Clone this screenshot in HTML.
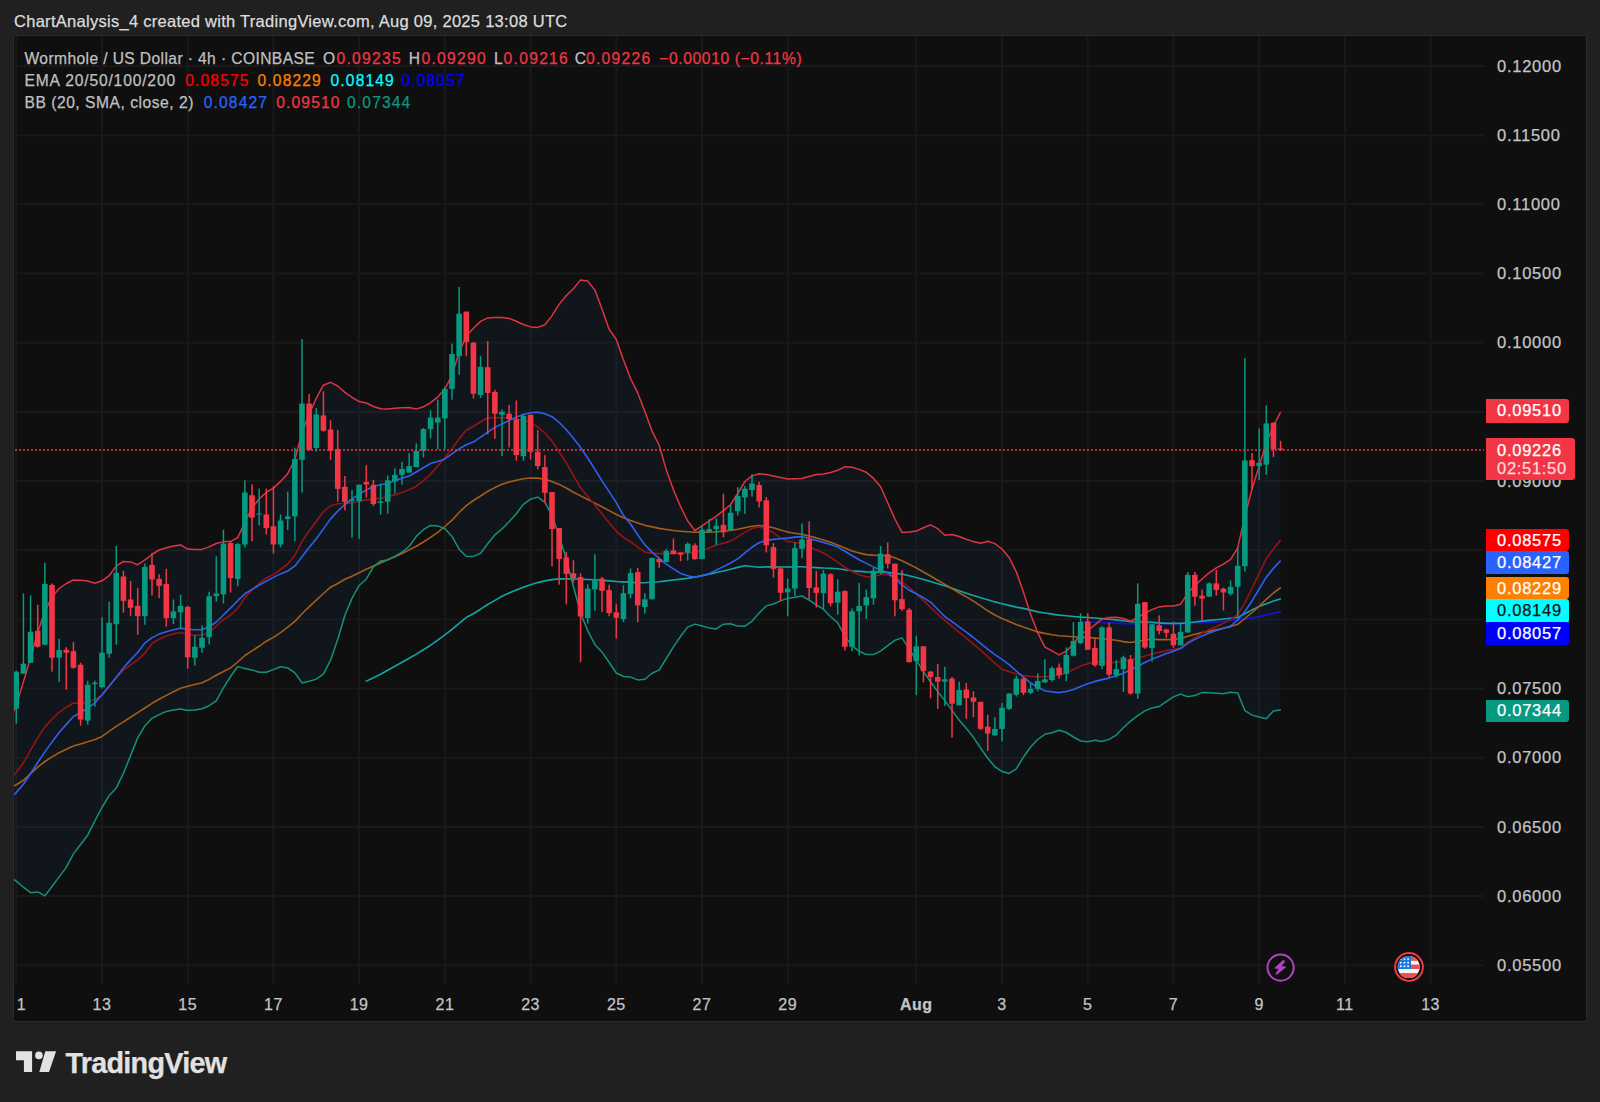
<!DOCTYPE html>
<html><head><meta charset="utf-8"><style>
html,body{margin:0;padding:0;}
div{-webkit-text-stroke:0.25px currentColor;}
body{width:1600px;height:1102px;position:relative;overflow:hidden;background:#202020;font-family:"Liberation Sans",sans-serif;}
#panel{position:absolute;left:13px;top:35px;width:1572px;height:985px;background:#0f0f0f;border:1px solid #2b2b2b;}
</style></head><body>
<div id="panel"></div>
<svg width="1600" height="1102" viewBox="0 0 1600 1102" style="position:absolute;left:0;top:0"><defs><clipPath id="pane"><rect x="14" y="36" width="1470" height="948"/></clipPath></defs><g stroke="#191919" stroke-width="2"><line x1="14" y1="66.0" x2="1484" y2="66.0"/><line x1="14" y1="135.2" x2="1484" y2="135.2"/><line x1="14" y1="204.3" x2="1484" y2="204.3"/><line x1="14" y1="273.5" x2="1484" y2="273.5"/><line x1="14" y1="342.7" x2="1484" y2="342.7"/><line x1="14" y1="411.9" x2="1484" y2="411.9"/><line x1="14" y1="481.0" x2="1484" y2="481.0"/><line x1="14" y1="550.2" x2="1484" y2="550.2"/><line x1="14" y1="619.4" x2="1484" y2="619.4"/><line x1="14" y1="688.5" x2="1484" y2="688.5"/><line x1="14" y1="757.7" x2="1484" y2="757.7"/><line x1="14" y1="826.9" x2="1484" y2="826.9"/><line x1="14" y1="896.0" x2="1484" y2="896.0"/><line x1="14" y1="965.2" x2="1484" y2="965.2"/><line x1="16.3" y1="36" x2="16.3" y2="984"/><line x1="102.0" y1="36" x2="102.0" y2="984"/><line x1="187.7" y1="36" x2="187.7" y2="984"/><line x1="273.4" y1="36" x2="273.4" y2="984"/><line x1="359.1" y1="36" x2="359.1" y2="984"/><line x1="444.9" y1="36" x2="444.9" y2="984"/><line x1="530.6" y1="36" x2="530.6" y2="984"/><line x1="616.3" y1="36" x2="616.3" y2="984"/><line x1="702.0" y1="36" x2="702.0" y2="984"/><line x1="787.7" y1="36" x2="787.7" y2="984"/><line x1="916.3" y1="36" x2="916.3" y2="984"/><line x1="1002.0" y1="36" x2="1002.0" y2="984"/><line x1="1087.7" y1="36" x2="1087.7" y2="984"/><line x1="1173.4" y1="36" x2="1173.4" y2="984"/><line x1="1259.1" y1="36" x2="1259.1" y2="984"/><line x1="1344.9" y1="36" x2="1344.9" y2="984"/><line x1="1430.6" y1="36" x2="1430.6" y2="984"/></g><g clip-path="url(#pane)"><polygon points="14.0,710.7 16.3,705.2 23.4,681.9 30.6,657.5 37.7,632.6 44.9,611.2 52.0,597.1 59.1,588.6 66.3,583.5 73.4,580.0 80.6,580.2 87.7,581.0 94.9,583.3 102.0,580.8 109.1,575.7 116.3,565.9 123.4,561.5 130.6,561.9 137.7,564.7 144.9,559.8 152.0,554.5 159.1,550.0 166.3,547.8 173.4,546.1 180.6,544.9 187.7,549.1 194.9,549.5 202.0,549.4 209.1,546.9 216.3,543.5 223.4,541.6 230.6,541.4 237.7,537.6 244.9,522.3 252.0,508.0 259.1,499.0 266.3,492.4 273.4,488.1 280.6,481.4 287.7,473.7 294.9,459.5 302.0,432.4 309.1,414.4 316.3,398.2 323.4,385.2 330.6,382.3 337.7,386.0 344.9,392.4 352.0,397.4 359.1,401.5 366.3,403.0 373.4,406.5 380.6,408.8 387.7,409.1 394.9,408.2 402.0,407.8 409.1,407.5 416.3,409.1 423.4,406.8 430.6,402.6 437.7,397.1 444.9,389.0 452.0,375.0 459.1,352.1 466.3,336.1 473.4,328.3 480.6,321.4 487.7,317.9 494.9,317.5 502.0,317.6 509.1,318.4 516.3,321.3 523.4,324.5 530.6,326.9 537.7,327.4 544.9,324.7 552.0,315.6 559.1,304.4 566.3,295.5 573.4,288.8 580.6,279.9 587.7,281.0 594.9,290.1 602.0,308.9 609.1,329.2 616.3,339.5 623.4,359.8 630.6,378.5 637.7,392.9 644.9,411.6 652.0,431.1 659.1,445.0 666.3,469.9 673.4,489.8 680.6,506.7 687.7,521.0 694.9,530.5 702.0,525.9 709.1,520.9 716.3,516.1 723.4,510.7 730.6,504.5 737.7,493.5 744.9,481.5 752.0,475.9 759.1,473.8 766.3,474.6 773.4,475.9 780.6,477.6 787.7,479.0 794.9,478.8 802.0,478.5 809.1,476.5 816.3,474.6 823.4,474.0 830.6,472.5 837.7,470.3 844.9,466.7 852.0,467.2 859.1,469.4 866.3,472.3 873.4,478.2 880.6,486.8 887.7,502.7 894.9,519.0 902.0,532.4 909.1,532.1 916.3,531.1 923.4,527.8 930.6,524.9 937.7,528.7 944.9,535.3 952.0,534.5 959.1,536.5 966.3,539.2 973.4,541.6 980.6,543.2 987.7,541.3 994.9,543.6 1002.0,549.0 1009.1,557.4 1016.3,571.8 1023.4,592.0 1030.6,614.2 1037.7,632.6 1044.9,647.1 1052.0,650.9 1059.1,654.9 1066.3,651.1 1073.4,644.0 1080.6,634.2 1087.7,630.2 1094.9,624.8 1102.0,619.0 1109.1,617.4 1116.3,617.3 1123.4,618.5 1130.6,621.3 1137.7,617.1 1144.9,613.3 1152.0,609.6 1159.1,606.9 1166.3,606.0 1173.4,605.9 1180.6,604.2 1187.7,593.3 1194.9,585.5 1202.0,579.0 1209.1,572.9 1216.3,567.8 1223.4,564.1 1230.6,559.4 1237.7,547.8 1244.9,516.1 1252.0,489.2 1259.1,466.0 1266.3,443.1 1273.4,426.0 1280.3,412.6 1280.3,710.1 1273.4,710.9 1266.3,718.7 1259.1,717.0 1252.0,715.1 1244.9,710.7 1237.7,692.9 1230.6,692.3 1223.4,693.7 1216.3,693.3 1209.1,692.8 1202.0,692.6 1194.9,695.5 1187.7,696.8 1180.6,694.1 1173.4,696.9 1166.3,701.7 1159.1,706.6 1152.0,708.0 1144.9,710.9 1137.7,715.7 1130.6,721.1 1123.4,727.8 1116.3,735.1 1109.1,739.4 1102.0,741.5 1094.9,740.3 1087.7,741.7 1080.6,741.0 1073.4,737.0 1066.3,732.5 1059.1,730.2 1052.0,732.8 1044.9,734.3 1037.7,739.5 1030.6,747.0 1023.4,757.2 1016.3,768.8 1009.1,773.4 1002.0,771.6 994.9,766.7 987.7,758.2 980.6,748.0 973.4,737.3 966.3,728.4 959.1,720.0 952.0,710.4 944.9,700.6 937.7,691.6 930.6,681.8 923.4,671.6 916.3,660.2 909.1,648.8 902.0,637.9 894.9,640.3 887.7,645.6 880.6,651.1 873.4,654.6 866.3,654.6 859.1,651.3 852.0,645.6 844.9,636.2 837.7,622.8 830.6,616.7 823.4,609.2 816.3,604.8 809.1,600.1 802.0,596.0 794.9,597.3 787.7,598.4 780.6,600.9 773.4,604.0 766.3,605.9 759.1,613.1 752.0,621.3 744.9,626.2 737.7,626.1 730.6,623.8 723.4,624.2 716.3,628.9 709.1,627.9 702.0,626.0 694.9,624.1 687.7,627.1 680.6,636.3 673.4,646.8 666.3,658.5 659.1,670.1 652.0,673.3 644.9,679.3 637.7,679.9 630.6,677.1 623.4,676.5 616.3,673.0 609.1,662.3 602.0,652.1 594.9,644.7 587.7,630.7 580.6,613.1 573.4,586.5 566.3,559.5 559.1,535.7 552.0,515.4 544.9,502.3 537.7,497.1 530.6,499.2 523.4,504.3 516.3,513.8 509.1,521.7 502.0,529.0 494.9,534.8 487.7,543.8 480.6,553.3 473.4,556.4 466.3,556.6 459.1,549.2 452.0,536.4 444.9,528.8 437.7,525.9 430.6,525.4 423.4,529.7 416.3,536.4 409.1,546.5 402.0,552.1 394.9,556.3 387.7,559.9 380.6,560.9 373.4,566.8 366.3,579.2 359.1,585.5 352.0,598.4 344.9,615.2 337.7,639.5 330.6,660.2 323.4,674.1 316.3,679.1 309.1,681.2 302.0,682.9 294.9,672.9 287.7,667.9 280.6,666.7 273.4,669.6 266.3,672.3 259.1,672.2 252.0,669.9 244.9,668.6 237.7,666.5 230.6,676.5 223.4,687.9 216.3,700.8 209.1,705.7 202.0,708.8 194.9,710.0 187.7,710.6 180.6,708.9 173.4,709.9 166.3,711.4 159.1,714.6 152.0,718.3 144.9,725.9 137.7,737.8 130.6,755.6 123.4,773.4 116.3,787.9 109.1,795.7 102.0,807.5 94.9,820.8 87.7,835.2 80.6,844.5 73.4,853.9 66.3,867.4 59.1,876.9 52.0,886.5 44.9,895.9 37.7,891.9 30.6,892.7 23.4,887.2 16.3,881.1 13.7,879.3" fill="#2196f3" fill-opacity="0.055" stroke="none"/><polyline points="1080.8,621.5 1087.7,621.9 1094.9,622.2 1102.0,622.6 1109.1,622.9 1116.3,623.2 1123.4,623.5 1130.6,623.8 1137.7,623.7 1144.9,623.4 1152.0,623.4 1159.1,623.5 1166.3,623.6 1173.4,623.7 1180.6,623.7 1187.7,623.5 1194.9,623.2 1202.0,622.9 1209.1,622.5 1216.3,622.0 1223.4,621.2 1230.6,620.5 1237.7,619.8 1244.9,618.9 1252.0,617.8 1259.1,616.7 1266.3,615.0 1273.4,613.2 1280.3,611.8" fill="none" stroke="#1414c4" stroke-width="1.8" stroke-linejoin="round" stroke-linecap="round"/><polyline points="366.3,681.1 373.4,677.7 380.6,674.2 387.7,670.3 394.9,666.3 402.0,662.3 409.1,658.2 416.3,654.1 423.4,649.7 430.6,645.2 437.7,640.2 444.9,634.9 452.0,629.4 459.1,623.3 466.3,617.4 473.4,613.7 480.6,609.2 487.7,604.5 494.9,600.4 502.0,596.3 509.1,593.0 516.3,590.0 523.4,587.3 530.6,584.7 537.7,582.6 544.9,580.9 552.0,579.6 559.1,578.9 566.3,578.7 573.4,579.0 580.6,579.3 587.7,579.5 594.9,579.8 602.0,580.3 609.1,580.9 616.3,581.5 623.4,581.9 630.6,582.4 637.7,582.8 644.9,582.7 652.0,582.3 659.1,581.8 666.3,580.9 673.4,580.0 680.6,579.1 687.7,578.2 694.9,577.1 702.0,575.6 709.1,574.1 716.3,572.5 723.4,571.0 730.6,569.2 737.7,567.4 744.9,565.7 752.0,566.5 759.1,567.3 766.3,566.7 773.4,566.9 780.6,567.0 787.7,567.0 794.9,566.8 802.0,566.8 809.1,567.2 816.3,567.6 823.4,568.0 830.6,568.2 837.7,568.7 844.9,569.8 852.0,570.8 859.1,571.4 866.3,571.9 873.4,572.1 880.6,572.2 887.7,572.4 894.9,573.2 902.0,574.1 909.1,575.8 916.3,577.5 923.4,579.4 930.6,581.5 937.7,583.7 944.9,585.8 952.0,588.3 959.1,590.8 966.3,593.3 973.4,595.6 980.6,597.7 987.7,599.8 994.9,601.9 1002.0,603.7 1009.1,605.4 1016.3,607.1 1023.4,608.4 1030.6,610.1 1037.7,611.9 1044.9,613.0 1052.0,614.1 1059.1,615.1 1066.3,615.8 1073.4,616.5 1080.6,617.1 1087.7,617.5 1094.9,618.0 1102.0,618.6 1109.1,619.2 1116.3,619.9 1123.4,620.8 1130.6,621.7 1137.7,622.0 1144.9,622.0 1152.0,622.2 1159.1,622.9 1166.3,623.4 1173.4,623.4 1180.6,623.4 1187.7,622.8 1194.9,622.0 1202.0,621.1 1209.1,620.4 1216.3,619.7 1223.4,619.0 1230.6,618.3 1237.7,617.5 1244.9,613.8 1252.0,609.9 1259.1,606.4 1266.3,603.7 1273.4,601.1 1280.3,598.9" fill="none" stroke="#12a6a6" stroke-width="1.6" stroke-linejoin="round" stroke-linecap="round"/><polyline points="13.7,786.1 16.3,784.8 23.4,780.3 30.6,773.7 37.7,767.2 44.9,761.5 52.0,756.9 59.1,752.7 66.3,749.3 73.4,746.0 80.6,743.9 87.7,741.8 94.9,739.4 102.0,736.4 109.1,731.4 116.3,726.4 123.4,721.8 130.6,717.3 137.7,712.7 144.9,708.0 152.0,703.3 159.1,699.3 166.3,695.4 173.4,691.8 180.6,688.3 187.7,686.2 194.9,684.5 202.0,682.7 209.1,679.4 216.3,675.3 223.4,671.5 230.6,667.9 237.7,662.0 244.9,655.5 252.0,650.8 259.1,646.3 266.3,641.2 273.4,637.4 280.6,632.6 287.7,627.2 294.9,621.4 302.0,613.8 309.1,606.9 316.3,600.2 323.4,593.5 330.6,587.2 337.7,583.5 344.9,579.2 352.0,576.2 359.1,572.8 366.3,569.2 373.4,566.1 380.6,562.9 387.7,559.8 394.9,556.7 402.0,553.5 409.1,549.9 416.3,546.2 423.4,542.0 430.6,537.4 437.7,532.4 444.9,526.5 452.0,520.2 459.1,512.5 466.3,505.6 473.4,500.5 480.6,496.0 487.7,491.3 494.9,487.6 502.0,484.3 509.1,482.1 516.3,480.2 523.4,478.7 530.6,478.0 537.7,478.1 544.9,479.3 552.0,481.4 559.1,484.4 566.3,488.0 573.4,492.2 580.6,495.9 587.7,499.5 594.9,503.1 602.0,506.7 609.1,510.6 616.3,514.5 623.4,517.8 630.6,520.5 637.7,522.9 644.9,525.3 652.0,526.9 659.1,528.4 666.3,529.5 673.4,530.5 680.6,531.2 687.7,531.8 694.9,532.3 702.0,532.3 709.1,532.2 716.3,531.8 723.4,531.3 730.6,530.4 737.7,529.3 744.9,527.7 752.0,526.2 759.1,525.5 766.3,526.4 773.4,527.8 780.6,530.1 787.7,532.1 794.9,533.2 802.0,534.3 809.1,536.1 816.3,537.9 823.4,540.0 830.6,542.2 837.7,544.9 844.9,547.9 852.0,550.9 859.1,552.9 866.3,554.6 873.4,555.1 880.6,555.4 887.7,555.5 894.9,557.7 902.0,560.7 909.1,564.2 916.3,567.9 923.4,572.0 930.6,576.0 937.7,580.2 944.9,584.4 952.0,588.5 959.1,592.7 966.3,596.9 973.4,601.1 980.6,605.9 987.7,610.8 994.9,615.0 1002.0,618.5 1009.1,621.5 1016.3,624.4 1023.4,627.1 1030.6,629.6 1037.7,631.9 1044.9,633.4 1052.0,634.7 1059.1,635.8 1066.3,636.2 1073.4,636.7 1080.6,637.1 1087.7,637.6 1094.9,638.0 1102.0,638.7 1109.1,639.5 1116.3,640.3 1123.4,641.6 1130.6,642.5 1137.7,641.3 1144.9,640.0 1152.0,639.3 1159.1,639.6 1166.3,639.6 1173.4,639.2 1180.6,638.6 1187.7,636.2 1194.9,634.3 1202.0,632.6 1209.1,631.1 1216.3,629.7 1223.4,628.3 1230.6,626.6 1237.7,624.3 1244.9,618.5 1252.0,612.5 1259.1,606.4 1266.3,599.3 1273.4,593.0 1280.3,587.8" fill="none" stroke="#a85c1a" stroke-width="1.6" stroke-linejoin="round" stroke-linecap="round"/><polyline points="13.7,775.1 16.3,772.4 23.4,762.8 30.6,750.2 37.7,737.9 44.9,726.9 52.0,719.2 59.1,712.3 66.3,707.4 73.4,703.0 80.6,703.3 87.7,702.1 94.9,699.2 102.0,695.5 109.1,686.7 116.3,677.8 123.4,670.3 130.6,664.8 137.7,659.9 144.9,653.2 152.0,643.5 159.1,639.2 166.3,636.1 173.4,633.9 180.6,632.5 187.7,634.2 194.9,635.3 202.0,635.1 209.1,632.6 216.3,626.0 223.4,619.8 230.6,615.0 237.7,608.5 244.9,597.6 252.0,590.1 259.1,583.3 266.3,578.0 273.4,574.6 280.6,569.5 287.7,564.0 294.9,555.4 302.0,541.4 309.1,530.9 316.3,521.2 323.4,511.7 330.6,505.7 337.7,503.7 344.9,503.5 352.0,502.9 359.1,501.4 366.3,499.9 373.4,499.0 380.6,498.1 387.7,496.7 394.9,494.9 402.0,492.4 409.1,489.8 416.3,486.2 423.4,480.9 430.6,474.1 437.7,466.0 444.9,457.7 452.0,449.0 459.1,438.8 466.3,430.3 473.4,426.2 480.6,421.8 487.7,418.0 494.9,417.6 502.0,417.8 509.1,418.3 516.3,419.0 523.4,420.2 530.6,422.3 537.7,427.2 544.9,433.0 552.0,441.1 559.1,451.8 566.3,462.7 573.4,475.5 580.6,487.8 587.7,496.5 594.9,505.1 602.0,513.8 609.1,522.8 616.3,531.3 623.4,537.4 630.6,541.8 637.7,546.8 644.9,552.1 652.0,553.1 659.1,553.6 666.3,553.6 673.4,553.5 680.6,553.3 687.7,553.0 694.9,552.6 702.0,550.7 709.1,547.9 716.3,545.1 723.4,543.2 730.6,541.1 737.7,536.9 744.9,532.4 752.0,528.5 759.1,526.8 766.3,529.1 773.4,532.8 780.6,537.8 787.7,541.2 794.9,542.5 802.0,543.4 809.1,546.8 816.3,550.0 823.4,553.0 830.6,557.4 837.7,562.1 844.9,567.5 852.0,571.5 859.1,574.7 866.3,576.8 873.4,576.9 880.6,574.4 887.7,574.4 894.9,577.4 902.0,581.7 909.1,587.5 916.3,593.8 923.4,600.3 930.6,607.4 937.7,614.3 944.9,620.3 952.0,626.3 959.1,632.2 966.3,638.2 973.4,644.1 980.6,650.2 987.7,656.6 994.9,663.1 1002.0,669.2 1009.1,671.8 1016.3,673.8 1023.4,675.6 1030.6,676.3 1037.7,676.9 1044.9,676.7 1052.0,676.2 1059.1,674.7 1066.3,672.9 1073.4,669.6 1080.6,666.1 1087.7,663.8 1094.9,661.9 1102.0,662.2 1109.1,662.7 1116.3,662.2 1123.4,661.5 1130.6,659.8 1137.7,658.0 1144.9,656.0 1152.0,654.0 1159.1,652.2 1166.3,650.5 1173.4,649.6 1180.6,648.0 1187.7,642.4 1194.9,637.6 1202.0,633.1 1209.1,629.8 1216.3,626.7 1223.4,623.2 1230.6,619.6 1237.7,614.5 1244.9,602.6 1252.0,588.5 1259.1,573.3 1266.3,558.9 1273.4,549.0 1280.3,540.5" fill="none" stroke="#981414" stroke-width="1.6" stroke-linejoin="round" stroke-linecap="round"/><polyline points="13.7,794.9 16.3,792.6 23.4,784.3 30.6,773.5 37.7,762.5 44.9,751.9 52.0,741.9 59.1,732.5 66.3,724.4 73.4,716.5 80.6,712.5 87.7,708.1 94.9,702.9 102.0,694.8 109.1,686.1 116.3,677.2 123.4,668.0 130.6,659.9 137.7,652.5 144.9,643.1 152.0,637.6 159.1,634.1 166.3,631.8 173.4,629.8 180.6,628.1 187.7,629.3 194.9,629.8 202.0,629.6 209.1,626.9 216.3,622.0 223.4,615.0 230.6,607.9 237.7,600.7 244.9,593.8 252.0,589.4 259.1,585.2 266.3,581.1 273.4,577.4 280.6,573.9 287.7,571.0 294.9,565.9 302.0,556.7 309.1,547.5 316.3,538.8 323.4,528.9 330.6,518.9 337.7,511.1 344.9,504.5 352.0,499.1 359.1,494.1 366.3,490.0 373.4,486.5 380.6,484.8 387.7,483.5 394.9,480.8 402.0,478.3 409.1,476.0 416.3,472.0 423.4,467.7 430.6,463.5 437.7,461.6 444.9,458.9 452.0,453.9 459.1,448.9 466.3,444.7 473.4,442.1 480.6,437.2 487.7,432.1 494.9,427.4 502.0,423.9 509.1,420.6 516.3,417.1 523.4,414.5 530.6,412.7 537.7,412.3 544.9,413.8 552.0,416.7 559.1,422.3 566.3,429.7 573.4,438.3 580.6,447.6 587.7,458.0 594.9,469.4 602.0,480.9 609.1,491.6 616.3,502.6 623.4,515.3 630.6,524.0 637.7,534.8 644.9,544.9 652.0,552.1 659.1,558.3 666.3,564.2 673.4,568.9 680.6,573.4 687.7,575.8 694.9,577.3 702.0,575.8 709.1,573.7 716.3,570.1 723.4,566.6 730.6,563.0 737.7,558.9 744.9,552.9 752.0,547.2 759.1,542.7 766.3,540.4 773.4,539.4 780.6,538.8 787.7,538.1 794.9,537.1 802.0,536.6 809.1,538.7 816.3,540.6 823.4,542.4 830.6,544.6 837.7,547.1 844.9,551.2 852.0,555.5 859.1,559.8 866.3,563.4 873.4,566.9 880.6,570.1 887.7,572.8 894.9,578.4 902.0,584.8 909.1,590.2 916.3,593.8 923.4,597.8 930.6,602.1 937.7,609.3 944.9,616.6 952.0,621.7 959.1,626.8 966.3,632.1 973.4,637.5 980.6,643.3 987.7,649.1 994.9,654.6 1002.0,659.4 1009.1,664.6 1016.3,671.0 1023.4,677.1 1030.6,682.8 1037.7,687.3 1044.9,690.7 1052.0,691.9 1059.1,692.6 1066.3,691.5 1073.4,689.5 1080.6,686.4 1087.7,683.7 1094.9,681.4 1102.0,679.6 1109.1,678.1 1116.3,675.8 1123.4,673.3 1130.6,669.8 1137.7,666.2 1144.9,662.5 1152.0,659.1 1159.1,656.5 1166.3,653.6 1173.4,651.2 1180.6,648.6 1187.7,643.3 1194.9,639.4 1202.0,635.9 1209.1,633.1 1216.3,630.5 1223.4,628.3 1230.6,626.0 1237.7,620.0 1244.9,611.4 1252.0,601.0 1259.1,589.2 1266.3,577.2 1273.4,568.4 1280.3,561.0" fill="none" stroke="#2f60f0" stroke-width="1.6" stroke-linejoin="round" stroke-linecap="round"/><polyline points="13.7,879.3 16.3,881.1 23.4,887.2 30.6,892.7 37.7,891.9 44.9,895.9 52.0,886.5 59.1,876.9 66.3,867.4 73.4,853.9 80.6,844.5 87.7,835.2 94.9,820.8 102.0,807.5 109.1,795.7 116.3,787.9 123.4,773.4 130.6,755.6 137.7,737.8 144.9,725.9 152.0,718.3 159.1,714.6 166.3,711.4 173.4,709.9 180.6,708.9 187.7,710.6 194.9,710.0 202.0,708.8 209.1,705.7 216.3,700.8 223.4,687.9 230.6,676.5 237.7,666.5 244.9,668.6 252.0,669.9 259.1,672.2 266.3,672.3 273.4,669.6 280.6,666.7 287.7,667.9 294.9,672.9 302.0,682.9 309.1,681.2 316.3,679.1 323.4,674.1 330.6,660.2 337.7,639.5 344.9,615.2 352.0,598.4 359.1,585.5 366.3,579.2 373.4,566.8 380.6,560.9 387.7,559.9 394.9,556.3 402.0,552.1 409.1,546.5 416.3,536.4 423.4,529.7 430.6,525.4 437.7,525.9 444.9,528.8 452.0,536.4 459.1,549.2 466.3,556.6 473.4,556.4 480.6,553.3 487.7,543.8 494.9,534.8 502.0,529.0 509.1,521.7 516.3,513.8 523.4,504.3 530.6,499.2 537.7,497.1 544.9,502.3 552.0,515.4 559.1,535.7 566.3,559.5 573.4,586.5 580.6,613.1 587.7,630.7 594.9,644.7 602.0,652.1 609.1,662.3 616.3,673.0 623.4,676.5 630.6,677.1 637.7,679.9 644.9,679.3 652.0,673.3 659.1,670.1 666.3,658.5 673.4,646.8 680.6,636.3 687.7,627.1 694.9,624.1 702.0,626.0 709.1,627.9 716.3,628.9 723.4,624.2 730.6,623.8 737.7,626.1 744.9,626.2 752.0,621.3 759.1,613.1 766.3,605.9 773.4,604.0 780.6,600.9 787.7,598.4 794.9,597.3 802.0,596.0 809.1,600.1 816.3,604.8 823.4,609.2 830.6,616.7 837.7,622.8 844.9,636.2 852.0,645.6 859.1,651.3 866.3,654.6 873.4,654.6 880.6,651.1 887.7,645.6 894.9,640.3 902.0,637.9 909.1,648.8 916.3,660.2 923.4,671.6 930.6,681.8 937.7,691.6 944.9,700.6 952.0,710.4 959.1,720.0 966.3,728.4 973.4,737.3 980.6,748.0 987.7,758.2 994.9,766.7 1002.0,771.6 1009.1,773.4 1016.3,768.8 1023.4,757.2 1030.6,747.0 1037.7,739.5 1044.9,734.3 1052.0,732.8 1059.1,730.2 1066.3,732.5 1073.4,737.0 1080.6,741.0 1087.7,741.7 1094.9,740.3 1102.0,741.5 1109.1,739.4 1116.3,735.1 1123.4,727.8 1130.6,721.1 1137.7,715.7 1144.9,710.9 1152.0,708.0 1159.1,706.6 1166.3,701.7 1173.4,696.9 1180.6,694.1 1187.7,696.8 1194.9,695.5 1202.0,692.6 1209.1,692.8 1216.3,693.3 1223.4,693.7 1230.6,692.3 1237.7,692.9 1244.9,710.7 1252.0,715.1 1259.1,717.0 1266.3,718.7 1273.4,710.9 1280.3,710.1" fill="none" stroke="#14917c" stroke-width="1.5" stroke-linejoin="round" stroke-linecap="round"/><polyline points="14.0,710.7 16.3,705.2 23.4,681.9 30.6,657.5 37.7,632.6 44.9,611.2 52.0,597.1 59.1,588.6 66.3,583.5 73.4,580.0 80.6,580.2 87.7,581.0 94.9,583.3 102.0,580.8 109.1,575.7 116.3,565.9 123.4,561.5 130.6,561.9 137.7,564.7 144.9,559.8 152.0,554.5 159.1,550.0 166.3,547.8 173.4,546.1 180.6,544.9 187.7,549.1 194.9,549.5 202.0,549.4 209.1,546.9 216.3,543.5 223.4,541.6 230.6,541.4 237.7,537.6 244.9,522.3 252.0,508.0 259.1,499.0 266.3,492.4 273.4,488.1 280.6,481.4 287.7,473.7 294.9,459.5 302.0,432.4 309.1,414.4 316.3,398.2 323.4,385.2 330.6,382.3 337.7,386.0 344.9,392.4 352.0,397.4 359.1,401.5 366.3,403.0 373.4,406.5 380.6,408.8 387.7,409.1 394.9,408.2 402.0,407.8 409.1,407.5 416.3,409.1 423.4,406.8 430.6,402.6 437.7,397.1 444.9,389.0 452.0,375.0 459.1,352.1 466.3,336.1 473.4,328.3 480.6,321.4 487.7,317.9 494.9,317.5 502.0,317.6 509.1,318.4 516.3,321.3 523.4,324.5 530.6,326.9 537.7,327.4 544.9,324.7 552.0,315.6 559.1,304.4 566.3,295.5 573.4,288.8 580.6,279.9 587.7,281.0 594.9,290.1 602.0,308.9 609.1,329.2 616.3,339.5 623.4,359.8 630.6,378.5 637.7,392.9 644.9,411.6 652.0,431.1 659.1,445.0 666.3,469.9 673.4,489.8 680.6,506.7 687.7,521.0 694.9,530.5 702.0,525.9 709.1,520.9 716.3,516.1 723.4,510.7 730.6,504.5 737.7,493.5 744.9,481.5 752.0,475.9 759.1,473.8 766.3,474.6 773.4,475.9 780.6,477.6 787.7,479.0 794.9,478.8 802.0,478.5 809.1,476.5 816.3,474.6 823.4,474.0 830.6,472.5 837.7,470.3 844.9,466.7 852.0,467.2 859.1,469.4 866.3,472.3 873.4,478.2 880.6,486.8 887.7,502.7 894.9,519.0 902.0,532.4 909.1,532.1 916.3,531.1 923.4,527.8 930.6,524.9 937.7,528.7 944.9,535.3 952.0,534.5 959.1,536.5 966.3,539.2 973.4,541.6 980.6,543.2 987.7,541.3 994.9,543.6 1002.0,549.0 1009.1,557.4 1016.3,571.8 1023.4,592.0 1030.6,614.2 1037.7,632.6 1044.9,647.1 1052.0,650.9 1059.1,654.9 1066.3,651.1 1073.4,644.0 1080.6,634.2 1087.7,630.2 1094.9,624.8 1102.0,619.0 1109.1,617.4 1116.3,617.3 1123.4,618.5 1130.6,621.3 1137.7,617.1 1144.9,613.3 1152.0,609.6 1159.1,606.9 1166.3,606.0 1173.4,605.9 1180.6,604.2 1187.7,593.3 1194.9,585.5 1202.0,579.0 1209.1,572.9 1216.3,567.8 1223.4,564.1 1230.6,559.4 1237.7,547.8 1244.9,516.1 1252.0,489.2 1259.1,466.0 1266.3,443.1 1273.4,426.0 1280.3,412.6" fill="none" stroke="#e03343" stroke-width="1.5" stroke-linejoin="round" stroke-linecap="round"/><g><rect x="15.54" y="670.70" width="1.5" height="52.89" fill="#089981"/><rect x="13.49" y="671.70" width="5.6" height="36.93" fill="#089981"/><rect x="22.68" y="593.45" width="1.5" height="80.24" fill="#089981"/><rect x="20.63" y="663.71" width="5.6" height="9.98" fill="#089981"/><rect x="29.82" y="595.45" width="1.5" height="67.27" fill="#089981"/><rect x="27.77" y="631.78" width="5.6" height="30.94" fill="#089981"/><rect x="36.96" y="604.83" width="1.5" height="42.91" fill="#f23645"/><rect x="34.91" y="630.78" width="5.6" height="15.97" fill="#f23645"/><rect x="44.11" y="562.91" width="1.5" height="82.44" fill="#089981"/><rect x="42.06" y="583.87" width="5.6" height="60.88" fill="#089981"/><rect x="51.25" y="583.47" width="1.5" height="88.22" fill="#f23645"/><rect x="49.20" y="584.87" width="5.6" height="72.85" fill="#f23645"/><rect x="58.39" y="638.76" width="1.5" height="43.31" fill="#089981"/><rect x="56.34" y="650.14" width="5.6" height="7.58" fill="#089981"/><rect x="65.54" y="647.15" width="1.5" height="42.51" fill="#f23645"/><rect x="63.49" y="649.74" width="5.6" height="2.99" fill="#f23645"/><rect x="72.68" y="642.16" width="1.5" height="26.55" fill="#f23645"/><rect x="70.63" y="651.14" width="5.6" height="16.57" fill="#f23645"/><rect x="79.82" y="662.71" width="1.5" height="62.87" fill="#f23645"/><rect x="77.77" y="664.71" width="5.6" height="54.89" fill="#f23645"/><rect x="86.96" y="680.68" width="1.5" height="43.91" fill="#089981"/><rect x="84.91" y="684.67" width="5.6" height="35.93" fill="#089981"/><rect x="94.11" y="680.68" width="1.5" height="25.95" fill="#089981"/><rect x="92.06" y="682.67" width="5.6" height="1.40" fill="#089981"/><rect x="101.25" y="617.41" width="1.5" height="71.26" fill="#089981"/><rect x="99.20" y="652.73" width="5.6" height="34.53" fill="#089981"/><rect x="108.39" y="601.84" width="1.5" height="55.89" fill="#089981"/><rect x="106.34" y="622.79" width="5.6" height="30.94" fill="#089981"/><rect x="115.54" y="545.95" width="1.5" height="98.80" fill="#089981"/><rect x="113.49" y="572.89" width="5.6" height="51.30" fill="#089981"/><rect x="122.68" y="570.90" width="1.5" height="41.92" fill="#f23645"/><rect x="120.63" y="576.49" width="5.6" height="24.35" fill="#f23645"/><rect x="129.82" y="580.88" width="1.5" height="34.93" fill="#f23645"/><rect x="127.77" y="599.44" width="5.6" height="8.38" fill="#f23645"/><rect x="136.96" y="587.86" width="1.5" height="46.91" fill="#f23645"/><rect x="134.91" y="605.83" width="5.6" height="10.38" fill="#f23645"/><rect x="144.11" y="563.51" width="1.5" height="61.28" fill="#089981"/><rect x="142.06" y="566.91" width="5.6" height="49.30" fill="#089981"/><rect x="151.25" y="552.93" width="1.5" height="42.51" fill="#f23645"/><rect x="149.20" y="564.91" width="5.6" height="14.57" fill="#f23645"/><rect x="158.39" y="574.29" width="1.5" height="23.95" fill="#f23645"/><rect x="156.34" y="578.88" width="5.6" height="6.99" fill="#f23645"/><rect x="165.54" y="568.90" width="1.5" height="57.88" fill="#f23645"/><rect x="163.49" y="583.87" width="5.6" height="34.33" fill="#f23645"/><rect x="172.68" y="599.44" width="1.5" height="24.75" fill="#089981"/><rect x="170.63" y="611.42" width="5.6" height="6.79" fill="#089981"/><rect x="179.82" y="594.85" width="1.5" height="33.93" fill="#089981"/><rect x="177.77" y="605.83" width="5.6" height="6.39" fill="#089981"/><rect x="186.96" y="605.83" width="1.5" height="62.87" fill="#f23645"/><rect x="184.91" y="606.83" width="5.6" height="50.50" fill="#f23645"/><rect x="194.11" y="635.37" width="1.5" height="30.34" fill="#089981"/><rect x="192.06" y="646.75" width="5.6" height="10.98" fill="#089981"/><rect x="201.25" y="625.39" width="1.5" height="27.35" fill="#089981"/><rect x="199.20" y="637.76" width="5.6" height="9.98" fill="#089981"/><rect x="208.39" y="591.69" width="1.5" height="52.66" fill="#089981"/><rect x="206.34" y="596.23" width="5.6" height="40.86" fill="#089981"/><rect x="215.54" y="556.28" width="1.5" height="45.40" fill="#089981"/><rect x="213.49" y="593.50" width="5.6" height="2.72" fill="#089981"/><rect x="222.68" y="529.59" width="1.5" height="73.91" fill="#089981"/><rect x="220.63" y="543.57" width="5.6" height="50.84" fill="#089981"/><rect x="229.82" y="541.75" width="1.5" height="50.84" fill="#f23645"/><rect x="227.77" y="543.02" width="5.6" height="35.05" fill="#f23645"/><rect x="236.97" y="543.02" width="1.5" height="43.22" fill="#089981"/><rect x="234.92" y="544.11" width="5.6" height="34.86" fill="#089981"/><rect x="244.11" y="480.35" width="1.5" height="66.85" fill="#089981"/><rect x="242.06" y="492.52" width="5.6" height="51.96" fill="#089981"/><rect x="251.25" y="484.35" width="1.5" height="56.86" fill="#f23645"/><rect x="249.20" y="495.24" width="5.6" height="22.36" fill="#f23645"/><rect x="258.39" y="488.53" width="1.5" height="36.88" fill="#089981"/><rect x="256.34" y="513.61" width="5.6" height="1.00" fill="#089981"/><rect x="265.54" y="488.53" width="1.5" height="45.96" fill="#f23645"/><rect x="263.49" y="514.51" width="5.6" height="13.62" fill="#f23645"/><rect x="272.68" y="486.16" width="1.5" height="67.39" fill="#f23645"/><rect x="270.63" y="526.32" width="5.6" height="18.16" fill="#f23645"/><rect x="279.82" y="514.31" width="1.5" height="32.89" fill="#089981"/><rect x="277.77" y="520.51" width="5.6" height="23.97" fill="#089981"/><rect x="286.97" y="491.61" width="1.5" height="38.34" fill="#089981"/><rect x="284.92" y="516.33" width="5.6" height="2.72" fill="#089981"/><rect x="294.11" y="447.67" width="1.5" height="93.54" fill="#089981"/><rect x="292.06" y="458.93" width="5.6" height="57.40" fill="#089981"/><rect x="301.25" y="339.08" width="1.5" height="153.44" fill="#089981"/><rect x="299.20" y="403.54" width="5.6" height="56.29" fill="#089981"/><rect x="308.39" y="393.92" width="1.5" height="56.84" fill="#f23645"/><rect x="306.34" y="403.54" width="5.6" height="46.30" fill="#f23645"/><rect x="315.54" y="408.08" width="1.5" height="43.58" fill="#089981"/><rect x="313.49" y="414.44" width="5.6" height="33.59" fill="#089981"/><rect x="322.68" y="391.38" width="1.5" height="40.31" fill="#f23645"/><rect x="320.63" y="415.35" width="5.6" height="15.43" fill="#f23645"/><rect x="329.82" y="420.25" width="1.5" height="39.59" fill="#f23645"/><rect x="327.77" y="429.51" width="5.6" height="21.25" fill="#f23645"/><rect x="336.97" y="429.87" width="1.5" height="71.73" fill="#f23645"/><rect x="334.92" y="448.94" width="5.6" height="39.95" fill="#f23645"/><rect x="344.11" y="476.00" width="1.5" height="34.50" fill="#f23645"/><rect x="342.06" y="486.80" width="5.6" height="15.20" fill="#f23645"/><rect x="351.25" y="490.10" width="1.5" height="47.60" fill="#089981"/><rect x="349.20" y="499.50" width="5.6" height="1.50" fill="#089981"/><rect x="358.39" y="484.70" width="1.5" height="54.10" fill="#089981"/><rect x="356.34" y="484.70" width="5.6" height="16.30" fill="#089981"/><rect x="365.54" y="465.10" width="1.5" height="32.60" fill="#f23645"/><rect x="363.49" y="482.00" width="5.6" height="2.50" fill="#f23645"/><rect x="372.68" y="479.90" width="1.5" height="26.20" fill="#f23645"/><rect x="370.63" y="484.70" width="5.6" height="19.30" fill="#f23645"/><rect x="379.82" y="483.60" width="1.5" height="31.20" fill="#089981"/><rect x="377.77" y="501.50" width="5.6" height="1.50" fill="#089981"/><rect x="386.97" y="475.50" width="1.5" height="38.20" fill="#089981"/><rect x="384.92" y="480.30" width="5.6" height="21.50" fill="#089981"/><rect x="394.11" y="468.30" width="1.5" height="25.10" fill="#089981"/><rect x="392.06" y="474.90" width="5.6" height="6.50" fill="#089981"/><rect x="401.25" y="461.80" width="1.5" height="22.90" fill="#089981"/><rect x="399.20" y="469.00" width="5.6" height="5.90" fill="#089981"/><rect x="408.39" y="453.10" width="1.5" height="19.60" fill="#089981"/><rect x="406.34" y="466.20" width="5.6" height="6.50" fill="#089981"/><rect x="415.54" y="443.30" width="1.5" height="23.90" fill="#089981"/><rect x="413.49" y="450.90" width="5.6" height="16.30" fill="#089981"/><rect x="422.68" y="428.00" width="1.5" height="29.40" fill="#089981"/><rect x="420.63" y="429.10" width="5.6" height="21.80" fill="#089981"/><rect x="429.82" y="410.20" width="1.5" height="28.30" fill="#089981"/><rect x="427.77" y="417.60" width="5.6" height="11.50" fill="#089981"/><rect x="436.97" y="399.70" width="1.5" height="49.70" fill="#089981"/><rect x="434.92" y="417.60" width="5.6" height="5.00" fill="#089981"/><rect x="444.11" y="386.70" width="1.5" height="62.70" fill="#089981"/><rect x="442.06" y="388.90" width="5.6" height="29.40" fill="#089981"/><rect x="451.25" y="343.60" width="1.5" height="56.10" fill="#089981"/><rect x="449.20" y="354.00" width="5.6" height="34.90" fill="#089981"/><rect x="458.39" y="287.00" width="1.5" height="87.70" fill="#089981"/><rect x="456.34" y="313.70" width="5.6" height="42.50" fill="#089981"/><rect x="465.54" y="311.60" width="1.5" height="44.60" fill="#f23645"/><rect x="463.49" y="311.60" width="5.6" height="30.50" fill="#f23645"/><rect x="472.68" y="341.80" width="1.5" height="56.80" fill="#f23645"/><rect x="470.63" y="342.70" width="5.6" height="51.00" fill="#f23645"/><rect x="479.82" y="356.00" width="1.5" height="41.80" fill="#089981"/><rect x="477.77" y="366.80" width="5.6" height="28.20" fill="#089981"/><rect x="486.97" y="341.00" width="1.5" height="93.40" fill="#f23645"/><rect x="484.92" y="367.20" width="5.6" height="25.70" fill="#f23645"/><rect x="494.11" y="389.80" width="1.5" height="49.00" fill="#f23645"/><rect x="492.06" y="392.00" width="5.6" height="21.70" fill="#f23645"/><rect x="501.25" y="409.30" width="1.5" height="46.90" fill="#089981"/><rect x="499.20" y="411.80" width="5.6" height="3.00" fill="#089981"/><rect x="508.40" y="405.00" width="1.5" height="42.50" fill="#f23645"/><rect x="506.35" y="413.70" width="5.6" height="5.50" fill="#f23645"/><rect x="515.54" y="400.50" width="1.5" height="60.10" fill="#f23645"/><rect x="513.49" y="419.20" width="5.6" height="35.90" fill="#f23645"/><rect x="522.68" y="413.70" width="1.5" height="46.90" fill="#089981"/><rect x="520.63" y="415.90" width="5.6" height="40.30" fill="#089981"/><rect x="529.82" y="414.80" width="1.5" height="44.70" fill="#f23645"/><rect x="527.77" y="414.80" width="5.6" height="37.00" fill="#f23645"/><rect x="536.97" y="430.10" width="1.5" height="39.20" fill="#f23645"/><rect x="534.92" y="451.80" width="5.6" height="14.20" fill="#f23645"/><rect x="544.11" y="455.10" width="1.5" height="47.90" fill="#f23645"/><rect x="542.06" y="467.10" width="5.6" height="25.70" fill="#f23645"/><rect x="551.25" y="492.10" width="1.5" height="74.10" fill="#f23645"/><rect x="549.20" y="492.10" width="5.6" height="37.00" fill="#f23645"/><rect x="558.40" y="528.00" width="1.5" height="56.70" fill="#f23645"/><rect x="556.35" y="528.00" width="5.6" height="31.00" fill="#f23645"/><rect x="565.54" y="552.00" width="1.5" height="52.30" fill="#f23645"/><rect x="563.49" y="557.40" width="5.6" height="16.40" fill="#f23645"/><rect x="572.68" y="560.30" width="1.5" height="22.20" fill="#f23645"/><rect x="570.63" y="573.30" width="5.6" height="4.80" fill="#f23645"/><rect x="579.82" y="573.30" width="1.5" height="88.90" fill="#f23645"/><rect x="577.77" y="577.00" width="5.6" height="39.50" fill="#f23645"/><rect x="586.97" y="584.20" width="1.5" height="39.30" fill="#089981"/><rect x="584.92" y="588.60" width="5.6" height="29.60" fill="#089981"/><rect x="594.11" y="554.20" width="1.5" height="56.60" fill="#089981"/><rect x="592.06" y="579.20" width="5.6" height="10.20" fill="#089981"/><rect x="601.25" y="577.00" width="1.5" height="34.90" fill="#f23645"/><rect x="599.20" y="578.60" width="5.6" height="12.20" fill="#f23645"/><rect x="608.40" y="584.70" width="1.5" height="31.50" fill="#f23645"/><rect x="606.35" y="590.10" width="5.6" height="22.90" fill="#f23645"/><rect x="615.54" y="603.70" width="1.5" height="34.80" fill="#f23645"/><rect x="613.49" y="612.40" width="5.6" height="5.40" fill="#f23645"/><rect x="622.68" y="585.20" width="1.5" height="37.00" fill="#089981"/><rect x="620.63" y="593.20" width="5.6" height="25.80" fill="#089981"/><rect x="629.82" y="568.40" width="1.5" height="29.90" fill="#089981"/><rect x="627.77" y="573.20" width="5.6" height="20.70" fill="#089981"/><rect x="636.97" y="567.80" width="1.5" height="54.40" fill="#f23645"/><rect x="634.92" y="572.10" width="5.6" height="33.30" fill="#f23645"/><rect x="644.11" y="593.20" width="1.5" height="20.30" fill="#089981"/><rect x="642.06" y="599.30" width="5.6" height="7.70" fill="#089981"/><rect x="651.25" y="557.50" width="1.5" height="41.80" fill="#089981"/><rect x="649.20" y="558.00" width="5.6" height="41.30" fill="#089981"/><rect x="658.40" y="557.50" width="1.5" height="10.30" fill="#f23645"/><rect x="656.35" y="559.10" width="5.6" height="3.20" fill="#f23645"/><rect x="665.54" y="548.80" width="1.5" height="13.10" fill="#089981"/><rect x="663.49" y="551.00" width="5.6" height="10.90" fill="#089981"/><rect x="672.68" y="538.40" width="1.5" height="15.70" fill="#f23645"/><rect x="670.63" y="550.40" width="5.6" height="3.70" fill="#f23645"/><rect x="679.82" y="552.50" width="1.5" height="8.70" fill="#f23645"/><rect x="677.77" y="552.50" width="5.6" height="2.20" fill="#f23645"/><rect x="686.97" y="542.30" width="1.5" height="18.30" fill="#089981"/><rect x="684.92" y="543.80" width="5.6" height="8.70" fill="#089981"/><rect x="694.11" y="543.20" width="1.5" height="16.50" fill="#f23645"/><rect x="692.06" y="545.30" width="5.6" height="13.80" fill="#f23645"/><rect x="701.25" y="524.90" width="1.5" height="34.20" fill="#089981"/><rect x="699.20" y="529.70" width="5.6" height="29.40" fill="#089981"/><rect x="708.40" y="519.20" width="1.5" height="13.70" fill="#089981"/><rect x="706.35" y="529.20" width="5.6" height="2.60" fill="#089981"/><rect x="715.54" y="518.30" width="1.5" height="26.60" fill="#089981"/><rect x="713.49" y="525.80" width="5.6" height="3.40" fill="#089981"/><rect x="722.68" y="493.70" width="1.5" height="43.60" fill="#f23645"/><rect x="720.63" y="524.90" width="5.6" height="7.40" fill="#f23645"/><rect x="729.83" y="504.60" width="1.5" height="25.50" fill="#089981"/><rect x="727.78" y="512.70" width="5.6" height="17.40" fill="#089981"/><rect x="736.97" y="487.20" width="1.5" height="28.30" fill="#089981"/><rect x="734.92" y="495.90" width="5.6" height="15.30" fill="#089981"/><rect x="744.11" y="486.00" width="1.5" height="28.00" fill="#089981"/><rect x="742.06" y="488.70" width="5.6" height="8.70" fill="#089981"/><rect x="751.25" y="474.20" width="1.5" height="22.40" fill="#089981"/><rect x="749.20" y="483.50" width="5.6" height="6.50" fill="#089981"/><rect x="758.40" y="481.80" width="1.5" height="25.70" fill="#f23645"/><rect x="756.35" y="485.00" width="5.6" height="16.40" fill="#f23645"/><rect x="765.54" y="497.00" width="1.5" height="55.50" fill="#f23645"/><rect x="763.49" y="500.30" width="5.6" height="45.00" fill="#f23645"/><rect x="772.68" y="543.20" width="1.5" height="34.40" fill="#f23645"/><rect x="770.63" y="547.10" width="5.6" height="21.80" fill="#f23645"/><rect x="779.83" y="567.10" width="1.5" height="34.00" fill="#f23645"/><rect x="777.78" y="568.40" width="5.6" height="24.40" fill="#f23645"/><rect x="786.97" y="578.70" width="1.5" height="37.60" fill="#089981"/><rect x="784.92" y="588.50" width="5.6" height="3.90" fill="#089981"/><rect x="794.11" y="542.70" width="1.5" height="53.40" fill="#089981"/><rect x="792.06" y="548.20" width="5.6" height="40.30" fill="#089981"/><rect x="801.25" y="523.60" width="1.5" height="34.40" fill="#089981"/><rect x="799.20" y="539.50" width="5.6" height="9.30" fill="#089981"/><rect x="808.40" y="521.40" width="1.5" height="77.90" fill="#f23645"/><rect x="806.35" y="539.50" width="5.6" height="48.50" fill="#f23645"/><rect x="815.54" y="571.00" width="1.5" height="36.60" fill="#f23645"/><rect x="813.49" y="587.40" width="5.6" height="5.40" fill="#f23645"/><rect x="822.68" y="570.00" width="1.5" height="39.10" fill="#089981"/><rect x="820.63" y="573.70" width="5.6" height="19.50" fill="#089981"/><rect x="829.83" y="573.20" width="1.5" height="33.10" fill="#f23645"/><rect x="827.78" y="574.30" width="5.6" height="29.00" fill="#f23645"/><rect x="836.97" y="579.30" width="1.5" height="35.30" fill="#089981"/><rect x="834.92" y="591.70" width="5.6" height="10.90" fill="#089981"/><rect x="844.11" y="590.20" width="1.5" height="60.30" fill="#f23645"/><rect x="842.06" y="591.10" width="5.6" height="55.70" fill="#f23645"/><rect x="851.25" y="608.50" width="1.5" height="42.70" fill="#089981"/><rect x="849.20" y="611.30" width="5.6" height="35.50" fill="#089981"/><rect x="858.40" y="583.00" width="1.5" height="72.50" fill="#089981"/><rect x="856.35" y="605.90" width="5.6" height="5.40" fill="#089981"/><rect x="865.54" y="589.50" width="1.5" height="29.40" fill="#089981"/><rect x="863.49" y="597.20" width="5.6" height="8.20" fill="#089981"/><rect x="872.68" y="567.80" width="1.5" height="37.00" fill="#089981"/><rect x="870.63" y="570.60" width="5.6" height="27.70" fill="#089981"/><rect x="879.83" y="546.00" width="1.5" height="28.30" fill="#089981"/><rect x="877.78" y="553.60" width="5.6" height="19.50" fill="#089981"/><rect x="886.97" y="542.40" width="1.5" height="26.00" fill="#f23645"/><rect x="884.92" y="554.20" width="5.6" height="9.50" fill="#f23645"/><rect x="894.11" y="563.70" width="1.5" height="52.60" fill="#f23645"/><rect x="892.06" y="563.70" width="5.6" height="36.60" fill="#f23645"/><rect x="901.25" y="570.00" width="1.5" height="40.90" fill="#f23645"/><rect x="899.20" y="599.10" width="5.6" height="10.10" fill="#f23645"/><rect x="908.40" y="607.80" width="1.5" height="55.00" fill="#f23645"/><rect x="906.35" y="609.70" width="5.6" height="52.40" fill="#f23645"/><rect x="915.54" y="635.70" width="1.5" height="59.50" fill="#089981"/><rect x="913.49" y="646.30" width="5.6" height="14.90" fill="#089981"/><rect x="922.68" y="646.30" width="1.5" height="36.10" fill="#f23645"/><rect x="920.63" y="646.30" width="5.6" height="24.80" fill="#f23645"/><rect x="929.83" y="671.10" width="1.5" height="27.10" fill="#f23645"/><rect x="927.78" y="671.60" width="5.6" height="5.40" fill="#f23645"/><rect x="936.97" y="664.00" width="1.5" height="44.90" fill="#f23645"/><rect x="934.92" y="677.00" width="5.6" height="4.70" fill="#f23645"/><rect x="944.11" y="666.80" width="1.5" height="39.20" fill="#089981"/><rect x="942.06" y="679.30" width="5.6" height="2.40" fill="#089981"/><rect x="951.26" y="677.00" width="1.5" height="60.70" fill="#f23645"/><rect x="949.21" y="678.60" width="5.6" height="25.10" fill="#f23645"/><rect x="958.40" y="681.70" width="1.5" height="23.60" fill="#089981"/><rect x="956.35" y="690.00" width="5.6" height="15.30" fill="#089981"/><rect x="965.54" y="682.90" width="1.5" height="35.90" fill="#f23645"/><rect x="963.49" y="689.50" width="5.6" height="8.70" fill="#f23645"/><rect x="972.68" y="691.20" width="1.5" height="25.90" fill="#f23645"/><rect x="970.63" y="697.50" width="5.6" height="4.30" fill="#f23645"/><rect x="979.83" y="701.80" width="1.5" height="28.30" fill="#f23645"/><rect x="977.78" y="701.80" width="5.6" height="27.10" fill="#f23645"/><rect x="986.97" y="714.80" width="1.5" height="36.10" fill="#f23645"/><rect x="984.92" y="726.60" width="5.6" height="7.00" fill="#f23645"/><rect x="994.11" y="717.10" width="1.5" height="18.90" fill="#089981"/><rect x="992.06" y="728.90" width="5.6" height="6.40" fill="#089981"/><rect x="1001.26" y="703.00" width="1.5" height="38.40" fill="#089981"/><rect x="999.21" y="707.70" width="5.6" height="21.20" fill="#089981"/><rect x="1008.40" y="693.50" width="1.5" height="16.50" fill="#089981"/><rect x="1006.35" y="693.50" width="5.6" height="15.40" fill="#089981"/><rect x="1015.54" y="675.80" width="1.5" height="20.80" fill="#089981"/><rect x="1013.49" y="678.60" width="5.6" height="16.10" fill="#089981"/><rect x="1022.68" y="677.00" width="1.5" height="18.20" fill="#f23645"/><rect x="1020.63" y="678.60" width="5.6" height="14.20" fill="#f23645"/><rect x="1029.83" y="682.90" width="1.5" height="11.30" fill="#089981"/><rect x="1027.78" y="688.80" width="5.6" height="4.00" fill="#089981"/><rect x="1036.97" y="673.40" width="1.5" height="17.80" fill="#089981"/><rect x="1034.92" y="681.00" width="5.6" height="7.80" fill="#089981"/><rect x="1044.11" y="659.30" width="1.5" height="23.60" fill="#089981"/><rect x="1042.06" y="679.30" width="5.6" height="3.10" fill="#089981"/><rect x="1051.26" y="666.40" width="1.5" height="15.30" fill="#089981"/><rect x="1049.21" y="668.30" width="5.6" height="11.70" fill="#089981"/><rect x="1058.40" y="663.50" width="1.5" height="15.10" fill="#f23645"/><rect x="1056.35" y="667.50" width="5.6" height="7.80" fill="#f23645"/><rect x="1065.54" y="647.50" width="1.5" height="33.50" fill="#089981"/><rect x="1063.49" y="655.00" width="5.6" height="18.90" fill="#089981"/><rect x="1072.68" y="622.00" width="1.5" height="34.40" fill="#089981"/><rect x="1070.63" y="640.90" width="5.6" height="14.80" fill="#089981"/><rect x="1079.83" y="613.20" width="1.5" height="30.70" fill="#089981"/><rect x="1077.78" y="622.00" width="5.6" height="21.20" fill="#089981"/><rect x="1086.97" y="613.20" width="1.5" height="36.60" fill="#f23645"/><rect x="1084.92" y="621.50" width="5.6" height="28.30" fill="#f23645"/><rect x="1094.11" y="637.60" width="1.5" height="29.20" fill="#f23645"/><rect x="1092.06" y="648.00" width="5.6" height="17.20" fill="#f23645"/><rect x="1101.26" y="626.20" width="1.5" height="43.00" fill="#089981"/><rect x="1099.21" y="627.40" width="5.6" height="38.50" fill="#089981"/><rect x="1108.40" y="622.70" width="1.5" height="55.00" fill="#f23645"/><rect x="1106.35" y="627.40" width="5.6" height="47.20" fill="#f23645"/><rect x="1115.54" y="659.80" width="1.5" height="17.90" fill="#089981"/><rect x="1113.49" y="669.20" width="5.6" height="6.10" fill="#089981"/><rect x="1122.68" y="655.70" width="1.5" height="36.20" fill="#089981"/><rect x="1120.63" y="657.40" width="5.6" height="11.80" fill="#089981"/><rect x="1129.83" y="655.00" width="1.5" height="39.70" fill="#f23645"/><rect x="1127.78" y="659.30" width="5.6" height="34.20" fill="#f23645"/><rect x="1136.97" y="583.30" width="1.5" height="115.60" fill="#089981"/><rect x="1134.92" y="603.80" width="5.6" height="89.70" fill="#089981"/><rect x="1144.11" y="602.20" width="1.5" height="46.50" fill="#f23645"/><rect x="1142.06" y="602.20" width="5.6" height="45.30" fill="#f23645"/><rect x="1151.26" y="623.80" width="1.5" height="37.70" fill="#089981"/><rect x="1149.21" y="624.30" width="5.6" height="23.80" fill="#089981"/><rect x="1158.40" y="615.40" width="1.5" height="19.00" fill="#f23645"/><rect x="1156.35" y="625.30" width="5.6" height="5.70" fill="#f23645"/><rect x="1165.54" y="628.70" width="1.5" height="9.00" fill="#f23645"/><rect x="1163.49" y="629.50" width="5.6" height="3.40" fill="#f23645"/><rect x="1172.68" y="621.50" width="1.5" height="26.30" fill="#f23645"/><rect x="1170.63" y="633.80" width="5.6" height="11.50" fill="#f23645"/><rect x="1179.83" y="624.30" width="1.5" height="21.00" fill="#089981"/><rect x="1177.78" y="631.90" width="5.6" height="13.40" fill="#089981"/><rect x="1186.97" y="571.90" width="1.5" height="60.60" fill="#089981"/><rect x="1184.92" y="574.80" width="5.6" height="57.70" fill="#089981"/><rect x="1194.11" y="571.90" width="1.5" height="33.90" fill="#f23645"/><rect x="1192.06" y="574.80" width="5.6" height="21.90" fill="#f23645"/><rect x="1201.26" y="589.50" width="1.5" height="31.00" fill="#f23645"/><rect x="1199.21" y="595.70" width="5.6" height="2.90" fill="#f23645"/><rect x="1208.40" y="582.40" width="1.5" height="14.30" fill="#089981"/><rect x="1206.35" y="583.40" width="5.6" height="13.30" fill="#089981"/><rect x="1215.54" y="570.00" width="1.5" height="25.70" fill="#f23645"/><rect x="1213.49" y="583.40" width="5.6" height="6.60" fill="#f23645"/><rect x="1222.69" y="587.50" width="1.5" height="22.90" fill="#f23645"/><rect x="1220.64" y="588.70" width="5.6" height="3.80" fill="#f23645"/><rect x="1229.83" y="580.50" width="1.5" height="15.20" fill="#089981"/><rect x="1227.78" y="586.80" width="5.6" height="7.00" fill="#089981"/><rect x="1236.97" y="546.80" width="1.5" height="69.90" fill="#089981"/><rect x="1234.92" y="565.80" width="5.6" height="21.00" fill="#089981"/><rect x="1244.11" y="358.00" width="1.5" height="213.50" fill="#089981"/><rect x="1242.06" y="460.50" width="5.6" height="105.70" fill="#089981"/><rect x="1251.26" y="452.90" width="1.5" height="36.20" fill="#f23645"/><rect x="1249.21" y="460.10" width="5.6" height="6.10" fill="#f23645"/><rect x="1258.40" y="428.50" width="1.5" height="51.50" fill="#089981"/><rect x="1256.35" y="462.80" width="5.6" height="3.40" fill="#089981"/><rect x="1265.54" y="405.30" width="1.5" height="69.50" fill="#089981"/><rect x="1263.49" y="423.40" width="5.6" height="41.30" fill="#089981"/><rect x="1272.69" y="422.40" width="1.5" height="34.70" fill="#f23645"/><rect x="1270.64" y="422.80" width="5.6" height="26.30" fill="#f23645"/><rect x="1279.83" y="440.90" width="1.5" height="10.20" fill="#f23645"/><rect x="1277.78" y="448.50" width="5.6" height="1.30" fill="#f23645"/></g></g><line x1="15" y1="450" x2="1484" y2="450" stroke="#f23645" stroke-width="1.6" stroke-dasharray="2 2"/><circle cx="1280.6" cy="967.6" r="13.1" fill="#0f0f0f" stroke="#ab47bc" stroke-width="2"/><polygon points="1283.2,960.3 1284.9,961.3 1281.3,966.2 1285.9,967.1 1276.6,974.4 1275.8,973.8 1279.0,969.1 1274.7,968.1" fill="#ab47bc" stroke="#ab47bc" stroke-width="0.7" stroke-linejoin="round"/><circle cx="1409" cy="967" r="13.9" fill="#0f0f0f" stroke="#f23645" stroke-width="2"/><clipPath id="flag"><circle cx="1408.75" cy="967.1" r="11"/></clipPath><g clip-path="url(#flag)"><rect x="1396" y="955" width="25" height="25" fill="#f4f6f8"/><rect x="1396" y="955" width="25" height="5.9" fill="#ee4e4e"/><rect x="1396" y="964.6" width="25" height="4.4" fill="#ee4e4e"/><rect x="1396" y="973.1" width="25" height="6" fill="#ee4e4e"/><rect x="1396" y="955" width="15" height="14" fill="#1b7be0"/><circle cx="1400.80" cy="959.10" r="0.95" fill="#fff"/><circle cx="1400.80" cy="962.65" r="0.95" fill="#fff"/><circle cx="1400.80" cy="966.20" r="0.95" fill="#fff"/><circle cx="1404.45" cy="959.10" r="0.95" fill="#fff"/><circle cx="1404.45" cy="962.65" r="0.95" fill="#fff"/><circle cx="1404.45" cy="966.20" r="0.95" fill="#fff"/><circle cx="1408.10" cy="959.10" r="0.95" fill="#fff"/><circle cx="1408.10" cy="962.65" r="0.95" fill="#fff"/><circle cx="1408.10" cy="966.20" r="0.95" fill="#fff"/></g></svg>
<div style="position:absolute;left:14px;top:12.5px;color:#dcdcdc;font-size:16.5px;font-weight:normal;letter-spacing:0.28px;white-space:nowrap;line-height:1">ChartAnalysis_4 created with TradingView.com, Aug 09, 2025 13:08 UTC</div><div style="position:absolute;left:24.5px;top:50.6px;color:#c0c0c0;font-size:15.6px;font-weight:normal;letter-spacing:0.4px;white-space:nowrap;line-height:1">Wormhole / US Dollar · 4h · COINBASE</div><div style="position:absolute;left:323px;top:50.6px;color:#c0c0c0;font-size:15.6px;font-weight:normal;letter-spacing:0px;white-space:nowrap;line-height:1">O</div><div style="position:absolute;left:336.5px;top:50.6px;color:#f23645;font-size:15.6px;font-weight:normal;letter-spacing:1.3px;white-space:nowrap;line-height:1">0.09235</div><div style="position:absolute;left:408.8px;top:50.6px;color:#c0c0c0;font-size:15.6px;font-weight:normal;letter-spacing:0px;white-space:nowrap;line-height:1">H</div><div style="position:absolute;left:421.5px;top:50.6px;color:#f23645;font-size:15.6px;font-weight:normal;letter-spacing:1.3px;white-space:nowrap;line-height:1">0.09290</div><div style="position:absolute;left:494.1px;top:50.6px;color:#c0c0c0;font-size:15.6px;font-weight:normal;letter-spacing:0px;white-space:nowrap;line-height:1">L</div><div style="position:absolute;left:503.6px;top:50.6px;color:#f23645;font-size:15.6px;font-weight:normal;letter-spacing:1.3px;white-space:nowrap;line-height:1">0.09216</div><div style="position:absolute;left:574.8px;top:50.6px;color:#c0c0c0;font-size:15.6px;font-weight:normal;letter-spacing:0px;white-space:nowrap;line-height:1">C</div><div style="position:absolute;left:586px;top:50.6px;color:#f23645;font-size:15.6px;font-weight:normal;letter-spacing:1.3px;white-space:nowrap;line-height:1">0.09226</div><div style="position:absolute;left:659.3px;top:50.6px;color:#f23645;font-size:15.6px;font-weight:normal;letter-spacing:0.62px;white-space:nowrap;line-height:1">−0.00010 (−0.11%)</div><div style="position:absolute;left:24.5px;top:73px;color:#c0c0c0;font-size:15.6px;font-weight:normal;letter-spacing:0.85px;white-space:nowrap;line-height:1">EMA 20/50/100/200</div><div style="position:absolute;left:185.2px;top:73px;color:#ff0000;font-size:15.6px;font-weight:normal;letter-spacing:1.15px;white-space:nowrap;line-height:1">0.08575</div><div style="position:absolute;left:257.5px;top:73px;color:#ff8000;font-size:15.6px;font-weight:normal;letter-spacing:1.15px;white-space:nowrap;line-height:1">0.08229</div><div style="position:absolute;left:330.5px;top:73px;color:#00ffff;font-size:15.6px;font-weight:normal;letter-spacing:1.15px;white-space:nowrap;line-height:1">0.08149</div><div style="position:absolute;left:401.4px;top:73px;color:#0000ff;font-size:15.6px;font-weight:normal;letter-spacing:1.15px;white-space:nowrap;line-height:1">0.08057</div><div style="position:absolute;left:24.5px;top:95.3px;color:#c0c0c0;font-size:15.6px;font-weight:normal;letter-spacing:0.53px;white-space:nowrap;line-height:1">BB (20, SMA, close, 2)</div><div style="position:absolute;left:203.7px;top:95.3px;color:#2962ff;font-size:15.6px;font-weight:normal;letter-spacing:1.15px;white-space:nowrap;line-height:1">0.08427</div><div style="position:absolute;left:276.2px;top:95.3px;color:#f23645;font-size:15.6px;font-weight:normal;letter-spacing:1.15px;white-space:nowrap;line-height:1">0.09510</div><div style="position:absolute;left:347px;top:95.3px;color:#089981;font-size:15.6px;font-weight:normal;letter-spacing:1.15px;white-space:nowrap;line-height:1">0.07344</div><div style="position:absolute;left:1497px;top:57.7px;color:#c4c4c4;font-size:16.5px;font-weight:normal;letter-spacing:0.75px;white-space:nowrap;line-height:1">0.12000</div><div style="position:absolute;left:1497px;top:126.87000000000002px;color:#c4c4c4;font-size:16.5px;font-weight:normal;letter-spacing:0.75px;white-space:nowrap;line-height:1">0.11500</div><div style="position:absolute;left:1497px;top:196.04px;color:#c4c4c4;font-size:16.5px;font-weight:normal;letter-spacing:0.75px;white-space:nowrap;line-height:1">0.11000</div><div style="position:absolute;left:1497px;top:265.21px;color:#c4c4c4;font-size:16.5px;font-weight:normal;letter-spacing:0.75px;white-space:nowrap;line-height:1">0.10500</div><div style="position:absolute;left:1497px;top:334.38px;color:#c4c4c4;font-size:16.5px;font-weight:normal;letter-spacing:0.75px;white-space:nowrap;line-height:1">0.10000</div><div style="position:absolute;left:1497px;top:472.71999999999997px;color:#c4c4c4;font-size:16.5px;font-weight:normal;letter-spacing:0.75px;white-space:nowrap;line-height:1">0.09000</div><div style="position:absolute;left:1497px;top:680.23px;color:#c4c4c4;font-size:16.5px;font-weight:normal;letter-spacing:0.75px;white-space:nowrap;line-height:1">0.07500</div><div style="position:absolute;left:1497px;top:749.4000000000001px;color:#c4c4c4;font-size:16.5px;font-weight:normal;letter-spacing:0.75px;white-space:nowrap;line-height:1">0.07000</div><div style="position:absolute;left:1497px;top:818.57px;color:#c4c4c4;font-size:16.5px;font-weight:normal;letter-spacing:0.75px;white-space:nowrap;line-height:1">0.06500</div><div style="position:absolute;left:1497px;top:887.74px;color:#c4c4c4;font-size:16.5px;font-weight:normal;letter-spacing:0.75px;white-space:nowrap;line-height:1">0.06000</div><div style="position:absolute;left:1497px;top:956.9100000000001px;color:#c4c4c4;font-size:16.5px;font-weight:normal;letter-spacing:0.75px;white-space:nowrap;line-height:1">0.05500</div><div style="position:absolute;left:1486px;top:399px;width:83px;height:23.5px;background:#f23645;border-radius:0 3px 3px 0"></div><div style="position:absolute;left:1497px;top:402.45px;color:#ffffff;font-size:16.5px;font-weight:normal;letter-spacing:0.75px;white-space:nowrap;line-height:1">0.09510</div><div style="position:absolute;left:1486px;top:438px;width:89px;height:42px;background:#f23645;border-radius:0 3px 3px 0"></div><div style="position:absolute;left:1497px;top:441.5px;color:#ffffff;font-size:16.5px;font-weight:normal;letter-spacing:0.75px;white-space:nowrap;line-height:1">0.09226</div><div style="position:absolute;left:1497px;top:460px;color:#ffd9dc;font-size:16.5px;font-weight:normal;letter-spacing:0.7px;white-space:nowrap;line-height:1">02:51:50</div><div style="position:absolute;left:1486px;top:528.7px;width:83px;height:22.299999999999955px;background:#ff0000;border-radius:0 3px 3px 0"></div><div style="position:absolute;left:1497px;top:531.5500000000001px;color:#ffffff;font-size:16.5px;font-weight:normal;letter-spacing:0.75px;white-space:nowrap;line-height:1">0.08575</div><div style="position:absolute;left:1486px;top:551px;width:83px;height:22.5px;background:#2962ff;border-radius:0 3px 3px 0"></div><div style="position:absolute;left:1497px;top:553.95px;color:#ffffff;font-size:16.5px;font-weight:normal;letter-spacing:0.75px;white-space:nowrap;line-height:1">0.08427</div><div style="position:absolute;left:1486px;top:577px;width:83px;height:22px;background:#ff7f00;border-radius:0 3px 3px 0"></div><div style="position:absolute;left:1497px;top:579.7px;color:#ffffff;font-size:16.5px;font-weight:normal;letter-spacing:0.75px;white-space:nowrap;line-height:1">0.08229</div><div style="position:absolute;left:1486px;top:599px;width:83px;height:23.5px;background:#00ffff;border-radius:0 3px 3px 0"></div><div style="position:absolute;left:1497px;top:602.45px;color:#111111;font-size:16.5px;font-weight:normal;letter-spacing:0.75px;white-space:nowrap;line-height:1">0.08149</div><div style="position:absolute;left:1486px;top:622px;width:83px;height:22.700000000000045px;background:#0000ff;border-radius:0 3px 3px 0"></div><div style="position:absolute;left:1497px;top:625.0500000000001px;color:#ffffff;font-size:16.5px;font-weight:normal;letter-spacing:0.75px;white-space:nowrap;line-height:1">0.08057</div><div style="position:absolute;left:1486px;top:699.6px;width:83px;height:22.199999999999932px;background:#089981;border-radius:0 3px 3px 0"></div><div style="position:absolute;left:1497px;top:702.4000000000001px;color:#ffffff;font-size:16.5px;font-weight:normal;letter-spacing:0.75px;white-space:nowrap;line-height:1">0.07344</div><div style="position:absolute;left:14px;top:984px;width:1470px;height:37px;overflow:hidden"><div style="position:absolute;left:-32.5px;top:12.5px;width:80px;text-align:center;color:#c4c4c4;font-size:16px;font-weight:normal;letter-spacing:0.5px;line-height:1">1</div><div style="position:absolute;left:48.0px;top:12.5px;width:80px;text-align:center;color:#c4c4c4;font-size:16px;font-weight:normal;letter-spacing:0.5px;line-height:1">13</div><div style="position:absolute;left:133.7px;top:12.5px;width:80px;text-align:center;color:#c4c4c4;font-size:16px;font-weight:normal;letter-spacing:0.5px;line-height:1">15</div><div style="position:absolute;left:219.4px;top:12.5px;width:80px;text-align:center;color:#c4c4c4;font-size:16px;font-weight:normal;letter-spacing:0.5px;line-height:1">17</div><div style="position:absolute;left:305.1px;top:12.5px;width:80px;text-align:center;color:#c4c4c4;font-size:16px;font-weight:normal;letter-spacing:0.5px;line-height:1">19</div><div style="position:absolute;left:390.9px;top:12.5px;width:80px;text-align:center;color:#c4c4c4;font-size:16px;font-weight:normal;letter-spacing:0.5px;line-height:1">21</div><div style="position:absolute;left:476.6px;top:12.5px;width:80px;text-align:center;color:#c4c4c4;font-size:16px;font-weight:normal;letter-spacing:0.5px;line-height:1">23</div><div style="position:absolute;left:562.3px;top:12.5px;width:80px;text-align:center;color:#c4c4c4;font-size:16px;font-weight:normal;letter-spacing:0.5px;line-height:1">25</div><div style="position:absolute;left:648.0px;top:12.5px;width:80px;text-align:center;color:#c4c4c4;font-size:16px;font-weight:normal;letter-spacing:0.5px;line-height:1">27</div><div style="position:absolute;left:733.7px;top:12.5px;width:80px;text-align:center;color:#c4c4c4;font-size:16px;font-weight:normal;letter-spacing:0.5px;line-height:1">29</div><div style="position:absolute;left:862.3px;top:12.5px;width:80px;text-align:center;color:#c4c4c4;font-size:16px;font-weight:bold;letter-spacing:0.5px;line-height:1">Aug</div><div style="position:absolute;left:948.0px;top:12.5px;width:80px;text-align:center;color:#c4c4c4;font-size:16px;font-weight:normal;letter-spacing:0.5px;line-height:1">3</div><div style="position:absolute;left:1033.7px;top:12.5px;width:80px;text-align:center;color:#c4c4c4;font-size:16px;font-weight:normal;letter-spacing:0.5px;line-height:1">5</div><div style="position:absolute;left:1119.4px;top:12.5px;width:80px;text-align:center;color:#c4c4c4;font-size:16px;font-weight:normal;letter-spacing:0.5px;line-height:1">7</div><div style="position:absolute;left:1205.1px;top:12.5px;width:80px;text-align:center;color:#c4c4c4;font-size:16px;font-weight:normal;letter-spacing:0.5px;line-height:1">9</div><div style="position:absolute;left:1290.9px;top:12.5px;width:80px;text-align:center;color:#c4c4c4;font-size:16px;font-weight:normal;letter-spacing:0.5px;line-height:1">11</div><div style="position:absolute;left:1376.6px;top:12.5px;width:80px;text-align:center;color:#c4c4c4;font-size:16px;font-weight:normal;letter-spacing:0.5px;line-height:1">13</div></div><svg style="position:absolute;left:0;top:1040px" width="70" height="40" viewBox="0 1040 70 40">
<path d="M16 1051.25 H32.1 V1071.9 H23.9 V1060.25 H16 Z" fill="#e2e2e2"/>
<circle cx="38.9" cy="1055.4" r="3.8" fill="#e2e2e2"/>
<path d="M45.3 1051.25 H56.1 L49 1071.9 H39.3 Z" fill="#e2e2e2"/>
</svg><div style="position:absolute;left:65.5px;top:1048.5px;color:#e2e2e2;font-size:28.8px;font-weight:bold;letter-spacing:-0.75px;white-space:nowrap;line-height:1">TradingView</div>
</body></html>
